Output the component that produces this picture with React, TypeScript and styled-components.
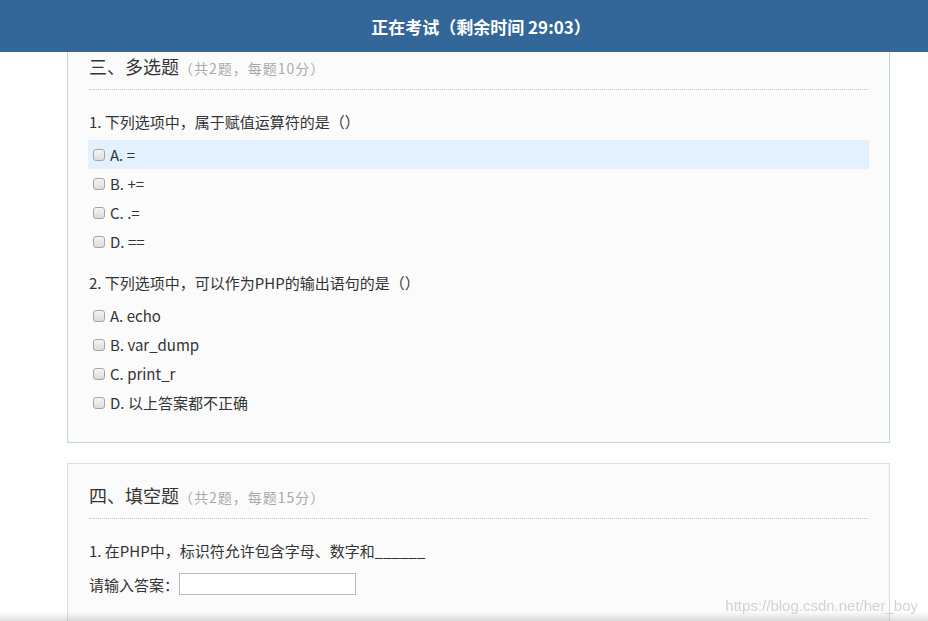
import React from 'react';
import styled, { createGlobalStyle } from 'styled-components';

const GlobalStyle = createGlobalStyle`
  html, body {
    margin: 0;
    padding: 0;
    background: #ffffff;
    font-family: "Liberation Sans", "Noto Sans CJK SC", sans-serif;
    color: #333;
  }
  * {
    text-spacing-trim: space-all;
    font-feature-settings: "halt" 0, "chws" 0;
  }
`;

interface Option {
  label: string;
  text: string;
  active?: boolean;
}

interface ChoiceQuestion {
  title: string;
  options: Option[];
}

const choiceQuestions: ChoiceQuestion[] = [
  {
    title: '1. 下列选项中，属于赋值运算符的是（）',
    options: [
      { label: 'A.', text: '=', active: true },
      { label: 'B.', text: '+=' },
      { label: 'C.', text: '.=' },
      { label: 'D.', text: '==' },
    ],
  },
  {
    title: '2. 下列选项中，可以作为PHP的输出语句的是（）',
    options: [
      { label: 'A.', text: 'echo' },
      { label: 'B.', text: 'var_dump' },
      { label: 'C.', text: 'print_r' },
      { label: 'D.', text: '以上答案都不正确' },
    ],
  },
];

const App: React.FC = () => {
  return (
    <Page>
      <GlobalStyle />
      <Header>
        <HeaderTitle>正在考试（剩余时间 29:03）</HeaderTitle>
      </Header>
      <Main>
        <Card $cut $active>
          <SectionTitle>
            三、多选题<SectionNote>（共2题，每题10分）</SectionNote>
          </SectionTitle>
          {choiceQuestions.map((q, index) => (
            <Question key={index}>
              <QuestionText>{q.title}</QuestionText>
              {q.options.map((opt, i) => (
                <OptionRow key={i} $active={opt.active}>
                  <CheckBox type="checkbox" readOnly />
                  <OptionText>
                    {opt.label} {opt.text}
                  </OptionText>
                </OptionRow>
              ))}
            </Question>
          ))}
        </Card>
        <Card>
          <SectionTitle>
            四、填空题<SectionNote>（共2题，每题15分）</SectionNote>
          </SectionTitle>
          <Question>
            <QuestionText>1. 在PHP中，标识符允许包含字母、数字和______</QuestionText>
            <AnswerRow>
              请输入答案：
              <AnswerInput type="text" />
            </AnswerRow>
          </Question>
        </Card>
      </Main>
      <Watermark>https://blog.csdn.net/her_boy</Watermark>
      <BottomShade />
    </Page>
  );
};

const Page = styled.div`
  width: 928px;
  min-height: 621px;
  overflow: hidden;
`;

const Header = styled.div`
  height: 52px;
  background: #336699;
  display: flex;
  align-items: center;
  justify-content: center;
  padding-left: 34px;
`;

const HeaderTitle = styled.h1`
  margin: 0;
  font-family: "Noto Sans CJK SC", sans-serif;
  font-size: 17px;
  font-weight: bold;
  color: #ffffff;
`;

const Main = styled.div`
  display: flex;
  flex-direction: column;
  gap: 20px;
  padding: 0 38px 80px 67px;
`;

const Card = styled.div<{ $cut?: boolean; $active?: boolean }>`
  background: #fbfbfb;
  border: 1px solid ${(p) => (p.$active ? '#bcd8e2' : '#dddddd')};
  border-top: ${(p) => (p.$cut ? 'none' : '')};
  padding: ${(p) => (p.$cut ? '0' : '17px')} 20px 25px 21px;
`;

const SectionTitle = styled.h2`
  margin: 0 0 20px;
  padding-bottom: 6px;
  border-bottom: 1px dotted #b8c4cc;
  font-family: "Noto Sans CJK SC", sans-serif;
  font-size: 18px;
  font-weight: normal;
  line-height: 29px;
  color: #333;
`;

const SectionNote = styled.span`
  font-size: 14px;
  letter-spacing: 1px;
  color: #aaaaaa;
`;

const Question = styled.div`
  display: flex;
  flex-direction: column;
  & + & {
    margin-top: 15px;
  }
`;

const QuestionText = styled.div`
  font-family: "Noto Sans CJK SC", sans-serif;
  font-size: 15px;
  line-height: 24px;
  color: #333;
  margin-bottom: 6px;
`;

const OptionRow = styled.label<{ $active?: boolean }>`
  display: flex;
  align-items: center;
  height: 29px;
  margin-left: -1px;
  padding-left: 5px;
  background: ${(p) => (p.$active ? '#e3f1fe' : 'transparent')};
`;

const CheckBox = styled.input`
  appearance: none;
  margin: 0 5px 0 0;
  width: 12px;
  height: 12px;
  border: 1px solid #a6a6a6;
  border-radius: 3px;
  background: linear-gradient(#f4f4f4, #dcdcdc);
`;

const OptionText = styled.span`
  font-family: "Noto Sans CJK SC", sans-serif;
  font-size: 15px;
  color: #333;
`;

const AnswerRow = styled.div`
  display: flex;
  align-items: center;
  margin-top: 3px;
  height: 24px;
  font-family: "Noto Sans CJK SC", sans-serif;
  font-size: 15px;
  color: #333;
`;

const AnswerInput = styled.input`
  margin-left: 0;
  width: 177px;
  height: 22px;
  box-sizing: border-box;
  border: 1px solid #bbbbbb;
  background: #ffffff;
  padding: 0 4px;
`;

const Watermark = styled.div`
  position: fixed;
  right: 10px;
  bottom: 7px;
  font-family: "Liberation Sans", sans-serif;
  font-size: 15px;
  color: rgba(200, 200, 200, 0.8);
`;

const BottomShade = styled.div`
  position: fixed;
  left: 0;
  right: 0;
  bottom: 0;
  height: 9px;
  background: linear-gradient(rgba(0, 0, 0, 0), rgba(0, 0, 0, 0.13));
`;

export default App;
